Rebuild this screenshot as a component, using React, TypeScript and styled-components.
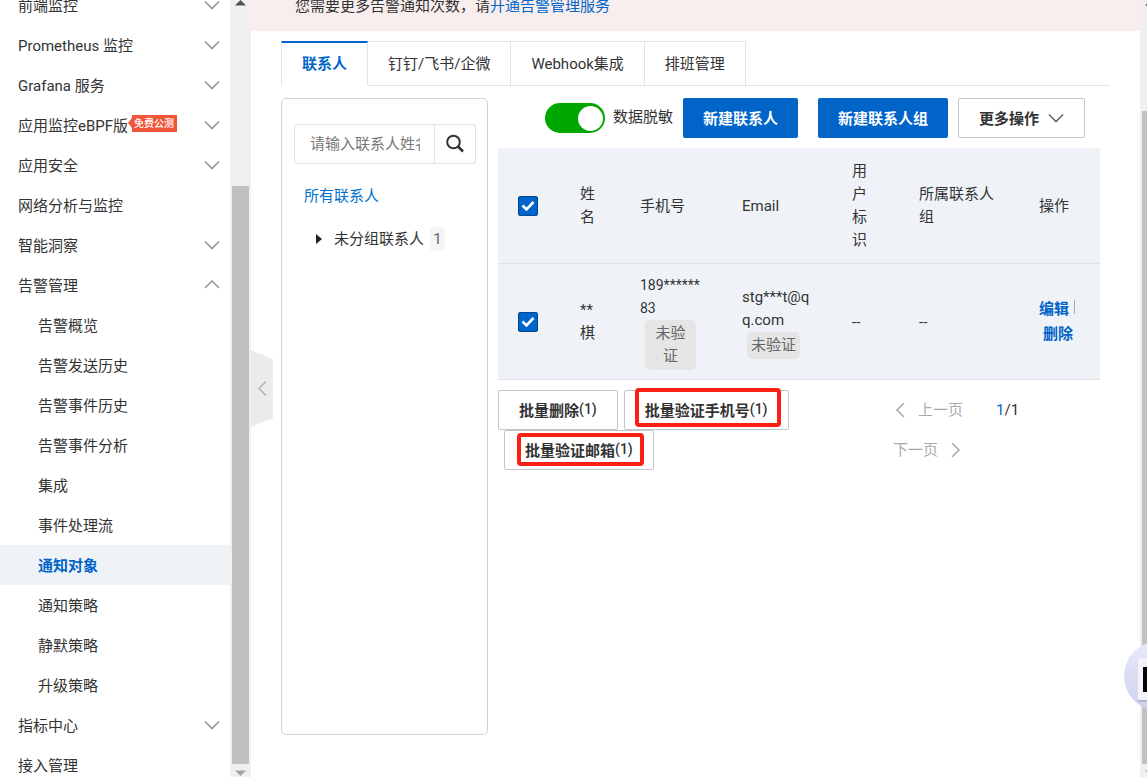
import React from "react";
import styled, { createGlobalStyle, css } from "styled-components";

const GlobalStyle = createGlobalStyle`
  * { box-sizing: border-box; }
  html, body { margin: 0; padding: 0; }
  body, button, input {
    font-family: Roboto, "Noto Sans CJK SC", sans-serif;
    font-size: 15px;
    color: #333;
  }
  button { padding: 0; border: 0; background: none; cursor: pointer; }
  a { color: inherit; text-decoration: none; }
`;

const Page = styled.div`
  display: flex;
  height: 100vh;
  overflow: hidden;
  background: #fff;
`;

/* ---------- sidebar ---------- */

const Sidebar = styled.nav`
  flex: none;
  width: 230px;
  overflow: hidden;
`;

const NavList = styled.ul`
  list-style: none;
  margin: -15px 0 0;
  padding: 0;
`;

const NavLink = styled.a<{ $child?: boolean; $active?: boolean }>`
  display: flex;
  align-items: center;
  height: 40px;
  padding: 0 10px 2px ${(p) => (p.$child ? "38px" : "18px")};
  white-space: nowrap;
  ${(p) =>
    p.$active &&
    css`
      background: #eff3f8;
      color: #0064c8;
      font-weight: 700;
    `}
`;

const NavChevron = styled.span`
  display: flex;
  margin: 2px 0 0 auto;
`;

const BetaBadge = styled.span`
  display: flex;
  align-items: center;
  height: 17px;
  margin-bottom: 2px;
  color: #fff;
  font-size: 10px;
  font-weight: 500;
  &::before {
    content: "";
    border: solid transparent;
    border-width: 5px 4px 5px 0;
    border-right-color: #f15438;
  }
`;

const BetaText = styled.span`
  height: 17px;
  padding: 0 3px 0 2px;
  line-height: 17px;
  background: #f15438;
`;

/* ---------- scrollbars ---------- */

const ScrollClip = styled.div<{ $width: number }>`
  flex: none;
  width: ${(p) => p.$width}px;
  overflow: hidden;
`;

const ScrollTrack = styled.div<{ $top: number }>`
  display: grid;
  grid-template-rows: ${(p) => p.$top}px 1fr 13px;
  justify-items: center;
  width: 21px;
  height: 100%;
  background: #f0f0f0;
`;

const ScrollThumb = styled.div`
  width: 17px;
  background: #c1c1c1;
`;

const ScrollArrow = styled.svg`
  display: block;
  align-self: start;
  &:last-child { margin-top: 6px; }
`;

/* ---------- main column ---------- */

const Main = styled.main`
  position: relative;
  flex: 1;
  min-width: 0;
`;

const CollapseButton = styled.button`
  position: absolute;
  left: 0;
  top: 50%;
  width: 22px;
  height: 77px;
  transform: translateY(-50%);
  display: flex;
  align-items: center;
  justify-content: center;
  background: #ebebeb;
  clip-path: polygon(0 0, 100% 12%, 100% 88%, 0 100%);
`;

const Notice = styled.div`
  height: 31px;
  padding: 0 44px;
  line-height: 12px;
  background: #f8eeee;
`;

const NoticeLink = styled.a`
  color: #0064c8;
`;

const Content = styled.div`
  padding: 10px 30px 0;
`;

const Tabs = styled.div`
  display: flex;
  height: 45px;
  border-bottom: 1px solid #e3e4e6;
`;

const Tab = styled.button<{ $active?: boolean }>`
  height: 45px;
  padding: 0 20px 2px;
  border: 1px solid #e3e4e6;
  border-left-width: 0;
  white-space: nowrap;
  ${(p) =>
    p.$active &&
    css`
      padding-bottom: 3px;
      border-left-width: 1px;
      border-top: 2px solid #0064c8;
      border-bottom-color: #fff;
      color: #0064c8;
      font-weight: 700;
    `}
`;

const Columns = styled.div`
  display: flex;
  align-items: flex-start;
  gap: 10px;
  padding: 12px 10px 0 0;
`;

/* ---------- contact groups ---------- */

const GroupPanel = styled.aside`
  flex: none;
  width: 207px;
  height: calc(100vh - 140px);
  padding: 25px 11px 0 12px;
  border: 1px solid #d0d3d8;
  border-radius: 5px;
`;

const SearchBox = styled.form`
  display: flex;
  height: 40px;
  border: 1px solid #e0e2e5;
  border-radius: 2px;
`;

const SearchInput = styled.input`
  flex: 1;
  min-width: 0;
  padding: 0 14px 0 15px;
  border: 0;
  outline: 0;
  background: none;
  &::placeholder { color: #777; opacity: 1; }
`;

const SearchButton = styled.button`
  display: flex;
  align-items: center;
  justify-content: center;
  width: 41px;
  border-left: 1px solid #e0e2e5;
`;

const AllContacts = styled.a`
  display: block;
  margin: 21px 0 0 10px;
  line-height: 23px;
  color: #0070cc;
`;

const GroupRow = styled.button`
  display: flex;
  align-items: center;
  margin: 19px 0 0 22px;
  line-height: 24px;
`;

const GroupName = styled.span`
  margin: 0 6px 0 12px;
`;

const Count = styled.span`
  width: 15px;
  border-radius: 3px;
  background: #f5f5f5;
  color: #666;
  text-align: center;
`;

/* ---------- contacts ---------- */

const Contacts = styled.section`
  flex: 1;
  min-width: 0;
`;

const Toolbar = styled.div`
  display: flex;
  align-items: center;
  justify-content: flex-end;
  gap: 10px;
  padding-right: 15px;
`;

const SwitchLabel = styled.label`
  display: flex;
  align-items: center;
  gap: 8px;
  white-space: nowrap;
`;

const SwitchText = styled.span`
  padding-bottom: 5px;
`;

const Switch = styled.input`
  appearance: none;
  display: flex;
  align-items: center;
  justify-content: flex-end;
  width: 60px;
  height: 30px;
  margin: 0;
  padding: 2px;
  border-radius: 15px;
  background: #00a700;
  &::after {
    content: "";
    width: 25px;
    height: 25px;
    border-radius: 50%;
    background: #fff;
  }
`;

const ButtonGroup = styled.div`
  display: flex;
  gap: 20px;
`;

const Button = styled.button<{ $primary?: boolean }>`
  position: relative;
  display: flex;
  align-items: center;
  gap: 9px;
  height: 40px;
  padding: 0 20px 2px;
  border: 1px solid #c0c6cc;
  border-radius: 2px;
  background: #fff;
  font-weight: 700;
  white-space: nowrap;
  & > svg { margin-top: 2px; }
  ${(p) =>
    p.$primary &&
    css`
      border: 0;
      background: #0064c8;
      color: #fff;
    `}
`;

const Table = styled.table`
  width: 100%;
  margin-top: 10px;
  border-spacing: 0;
  table-layout: fixed;
  background: #eff3f8;
`;

const cell = css`
  height: 116px;
  padding: 1px 18px 0 20px;
  border-bottom: 1px solid #dee2e8;
  font-weight: 400;
  line-height: 23px;
  text-align: left;
  vertical-align: middle;
  word-break: break-all;
`;

const HeadCell = styled.th`${cell}`;
const Cell = styled.td`${cell}`;

const PhoneNumber = styled.span`
  display: block;
  font-size: 14px;
`;

const CheckWrap = styled.label`
  position: relative;
  display: block;
  width: 20px;
  height: 20px;
`;

const CheckInput = styled.input`
  appearance: none;
  display: block;
  width: 20px;
  height: 20px;
  margin: 0;
  border: 1px solid #00499a;
  border-radius: 2px;
  background: #0064c8;
`;

const CheckMark = styled.svg`
  position: absolute;
  left: 0;
  top: 0;
  pointer-events: none;
`;

const Status = styled.span<{ $narrow?: boolean }>`
  display: block;
  width: ${(p) => (p.$narrow ? "51px" : "fit-content")};
  margin: 0 5px;
  padding: 2px 4px;
  border-radius: 5px;
  background: #e5e5e5;
  color: #666;
  text-align: center;
`;

const Divider = styled.span`
  display: inline-block;
  width: 1px;
  height: 14px;
  margin-left: 5px;
  background: #aaa;
`;

const RowAction = styled.button`
  color: #0064c8;
  font-weight: 700;
  line-height: 25px;
  ${Divider} + & { margin-left: 4px; }
`;

/* ---------- footer ---------- */

const Footer = styled.div`
  display: flex;
  padding-top: 10px;
`;

const BulkActions = styled.div`
  display: flex;
  flex: 1;
  flex-wrap: wrap;
  min-width: 0;
  align-content: flex-start;
  & > button + button { margin-left: 6px; }
`;

const ButtonLabel = styled.span`
  display: flex;
  align-items: center;
`;

const SelectedCount = styled.span`
  font-size: 14px;
  font-weight: 500;
`;

const Highlight = styled.span<{ $wide?: boolean }>`
  position: absolute;
  inset: ${(p) => (p.$wide ? "-3px 7px 2px 10px" : "2px 9px 3px 12px")};
  border: 4px solid #fb1f14;
  border-radius: 4px;
`;

const Pager = styled.div`
  display: flex;
  flex-wrap: wrap;
  width: 227px;
  line-height: 40px;
`;

const PagerButton = styled.button`
  display: flex;
  align-items: center;
  gap: 13px;
  height: 40px;
  padding: 0 20px;
  color: #aaa;
  line-height: 40px;
  &:first-child { padding-left: 22px; }
`;

const PageCount = styled.span`
  flex: 1;
  padding-left: 13px;
`;

const CurrentPage = styled.span`
  color: #0064c8;
`;

const Assistant = styled.button`
  position: fixed;
  right: -47px;
  bottom: 66px;
  width: 70px;
  height: 70px;
`;

/* ---------- drawings ---------- */

type Direction = "down" | "up" | "left" | "right";

const chevrons: Record<Direction, [number, number, string]> = {
  down: [16, 10, "M1 1.5l7 7 7-7"],
  up: [16, 10, "M1 8l7-7 7 7"],
  left: [10, 16, "M9 1L2 8l7 7"],
  right: [10, 16, "M1 1l7 7-7 7"],
};

function Chevron({ direction, color = "#999" }: { direction: Direction; color?: string }) {
  const [width, height, path] = chevrons[direction];
  return (
    <svg width={width} height={height} viewBox={`0 0 ${width} ${height}`} fill="none" stroke={color} strokeWidth="1.6" aria-hidden>
      <path d={path} />
    </svg>
  );
}

function Scrollbar({ width, top }: { width: number; top: number }) {
  return (
    <ScrollClip $width={width} aria-hidden>
      <ScrollTrack $top={top}>
        <ScrollArrow width="11" height="6" viewBox="0 0 11 6">
          <path d="M0 5.5L5.5 0 11 5.5z" fill="#505050" />
        </ScrollArrow>
        <ScrollThumb />
        <ScrollArrow width="11" height="6" viewBox="0 0 11 6">
          <path d="M0 .5h11L5.5 6z" fill="#a3a3a3" />
        </ScrollArrow>
      </ScrollTrack>
    </ScrollClip>
  );
}

function Checkbox({ label }: { label: string }) {
  return (
    <CheckWrap>
      <CheckInput type="checkbox" defaultChecked aria-label={label} />
      <CheckMark width="20" height="20" viewBox="0 0 20 20" fill="none" stroke="#fff" strokeWidth="2.6">
        <path d="M4.5 9.5l4 4 7-7.5" />
      </CheckMark>
    </CheckWrap>
  );
}

function BulkLabel({ text, count }: { text: string; count: number }) {
  return (
    <ButtonLabel>
      {text}
      <SelectedCount>({count})</SelectedCount>
    </ButtonLabel>
  );
}

/* ---------- data ---------- */

interface NavItem {
  text: string;
  arrow?: Direction;
  child?: boolean;
  active?: boolean;
  badge?: string;
}

const navItems: NavItem[] = [
  { text: "前端监控", arrow: "down" },
  { text: "Prometheus 监控", arrow: "down" },
  { text: "Grafana 服务", arrow: "down" },
  { text: "应用监控eBPF版", arrow: "down", badge: "免费公测" },
  { text: "应用安全", arrow: "down" },
  { text: "网络分析与监控" },
  { text: "智能洞察", arrow: "down" },
  { text: "告警管理", arrow: "up" },
  { text: "告警概览", child: true },
  { text: "告警发送历史", child: true },
  { text: "告警事件历史", child: true },
  { text: "告警事件分析", child: true },
  { text: "集成", child: true },
  { text: "事件处理流", child: true },
  { text: "通知对象", child: true, active: true },
  { text: "通知策略", child: true },
  { text: "静默策略", child: true },
  { text: "升级策略", child: true },
  { text: "指标中心", arrow: "down" },
  { text: "接入管理" },
];

const tabs = ["联系人", "钉钉/飞书/企微", "Webhook集成", "排班管理"];
const headings = ["姓名", "手机号", "Email", "用户标识", "所属联系人组", "操作"];
const columnWidths = [62, 60, 102, 110, 67, 120, 81];

export default function App() {
  return (
    <>
      <GlobalStyle />
      <Page>
        <Sidebar>
          <NavList>
            {navItems.map((item) => (
              <li key={item.text}>
                <NavLink href="#" $child={item.child} $active={item.active}>
                  {item.text}
                  {item.badge && (
                    <BetaBadge>
                      <BetaText>{item.badge}</BetaText>
                    </BetaBadge>
                  )}
                  {item.arrow && (
                    <NavChevron>
                      <Chevron direction={item.arrow} />
                    </NavChevron>
                  )}
                </NavLink>
              </li>
            ))}
          </NavList>
        </Sidebar>
        <Scrollbar width={21} top={186} />

        <Main>
          <Notice>
            您需要更多告警通知次数，请<NoticeLink href="#">开通告警管理服务</NoticeLink>
          </Notice>
          <Content>
            <Tabs role="tablist">
              {tabs.map((name, i) => (
                <Tab key={name} role="tab" aria-selected={i === 0} $active={i === 0}>
                  {name}
                </Tab>
              ))}
            </Tabs>
            <Columns>
              <GroupPanel>
                <SearchBox>
                  <SearchInput placeholder="请输入联系人姓名" aria-label="联系人姓名" />
                  <SearchButton type="button" aria-label="搜索">
                    <svg width="20" height="20" viewBox="0 0 20 20" fill="none" stroke="#333" aria-hidden>
                      <circle cx="8.5" cy="8" r="6.3" strokeWidth="2" />
                      <path d="M13 12.5l5 5" strokeWidth="2.6" />
                    </svg>
                  </SearchButton>
                </SearchBox>
                <AllContacts href="#">所有联系人</AllContacts>
                <GroupRow type="button">
                  <svg width="6" height="10" viewBox="0 0 6 10" aria-hidden>
                    <path d="M0 0l6 5-6 5z" fill="#222" />
                  </svg>
                  <GroupName>未分组联系人</GroupName>
                  <Count>1</Count>
                </GroupRow>
              </GroupPanel>

              <Contacts>
                <Toolbar>
                  <SwitchLabel>
                    <Switch type="checkbox" role="switch" defaultChecked />
                    <SwitchText>数据脱敏</SwitchText>
                  </SwitchLabel>
                  <ButtonGroup>
                    <Button $primary>新建联系人</Button>
                    <Button $primary>新建联系人组</Button>
                  </ButtonGroup>
                  <Button>
                    更多操作
                    <Chevron direction="down" color="#666" />
                  </Button>
                </Toolbar>

                <Table>
                  <colgroup>
                    {columnWidths.map((width, i) => (
                      <col key={i} style={{ width }} />
                    ))}
                  </colgroup>
                  <thead>
                    <tr>
                      <HeadCell>
                        <Checkbox label="全选" />
                      </HeadCell>
                      {headings.map((name) => (
                        <HeadCell key={name}>{name}</HeadCell>
                      ))}
                    </tr>
                  </thead>
                  <tbody>
                    <tr>
                      <Cell>
                        <Checkbox label="选择联系人" />
                      </Cell>
                      <Cell>**棋</Cell>
                      <Cell>
                        <PhoneNumber>189******83</PhoneNumber>
                        <Status $narrow>未验证</Status>
                      </Cell>
                      <Cell>
                        stg***t@qq.com
                        <Status>未验证</Status>
                      </Cell>
                      <Cell>--</Cell>
                      <Cell>--</Cell>
                      <Cell>
                        <RowAction>编辑</RowAction>
                        <Divider />
                        <RowAction>删除</RowAction>
                      </Cell>
                    </tr>
                  </tbody>
                </Table>

                <Footer>
                  <BulkActions>
                    <Button>
                      <BulkLabel text="批量删除" count={1} />
                    </Button>
                    <Button>
                      <BulkLabel text="批量验证手机号" count={1} />
                      <Highlight $wide />
                    </Button>
                    <Button>
                      <BulkLabel text="批量验证邮箱" count={1} />
                      <Highlight />
                    </Button>
                  </BulkActions>
                  <Pager>
                    <PagerButton disabled>
                      <Chevron direction="left" color="#aaa" />
                      上一页
                    </PagerButton>
                    <PageCount>
                      <CurrentPage>1</CurrentPage>/1
                    </PageCount>
                    <PagerButton disabled>
                      下一页
                      <Chevron direction="right" color="#aaa" />
                    </PagerButton>
                  </Pager>
                </Footer>
              </Contacts>
            </Columns>
          </Content>
          <CollapseButton aria-label="收起菜单">
            <Chevron direction="left" color="#b5b5b5" />
          </CollapseButton>
        </Main>
        <Scrollbar width={7} top={111} />
      </Page>

      <Assistant aria-label="智能助手">
        <svg width="70" height="70" viewBox="0 0 70 70" aria-hidden>
          <defs>
            <linearGradient id="orb" x1="0" y1="0" x2="0" y2="1">
              <stop offset="0" stopColor="#e9ebf8" />
              <stop offset="1" stopColor="#cdd1ef" />
            </linearGradient>
          </defs>
          <circle cx="35" cy="35" r="35" fill="url(#orb)" />
          <rect x="14" y="17" width="42" height="42" rx="2" fill="#f3f4fa" />
          <path d="M14 59h42v2H14z" fill="#b4b7c8" />
          <rect x="19" y="26" width="32" height="25" fill="#050505" />
        </svg>
      </Assistant>
    </>
  );
}
